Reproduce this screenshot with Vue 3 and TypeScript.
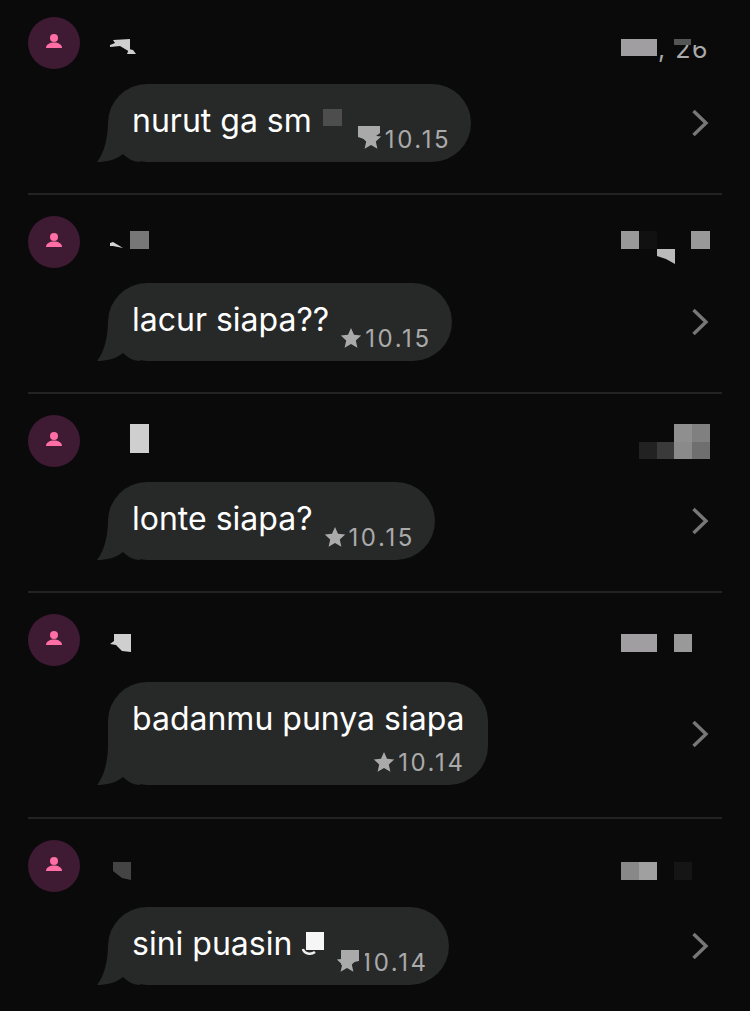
<script setup lang="ts">
interface Message {
  text: string;
  time: string;
  // px kept after the text for the emoji that the censor block sits on
  emojiGap?: number;
  // text fills the bubble, so the time drops to its own line
  stacked?: boolean;
  date?: string;
}

const messages: Message[] = [
  { text: "nurut ga sm", time: "10.15", emojiGap: 37, date: ", 26" },
  { text: "lacur siapa??", time: "10.15" },
  { text: "lonte siapa?", time: "10.15" },
  { text: "badanmu punya siapa", time: "10.14", stacked: true },
  { text: "sini puasin", time: "10.14", emojiGap: 33 },
];

// Censor blocks pasted over the screenshot: [points, fill]
const BUBBLE = "#272828";
const censors: [string, string][] = [
  // row 1
  ["110,45 115,43 113,40 130,39 130,52 120,46 110,47", "#cfcfcf"],
  ["129,49 133,50 136,54 127,54", "#cfcfcf"],
  ["621,39 657,39 657,56 621,56", "#a09ea0"],
  ["674,39 691,39 691,45 674,45", "#555555"],
  ["691,39 710,39 710,45 691,45", "#0a0a0b"],
  ["323,109 342,109 342,126 323,126", "#4d4d4d"],
  ["358,126 380,126 380,133 372,139 364,139 358,137", "#a9a9a9"],
  // row 2
  ["110,243 113,242 123,248 113,246 110,246", "#d5d5d5"],
  ["130,231 149,231 149,249 130,249", "#777777"],
  ["621,231 639,231 639,249 621,249", "#999999"],
  ["639,231 657,231 657,249 639,249", "#111111"],
  ["657,249 675,249 675,264 666,259 657,256", "#bbbbbb"],
  ["691,231 710,231 710,249 691,249", "#999999"],
  // row 3
  ["130,424 149,424 149,453 130,453", "#cfcfcf"],
  ["639,442 657,442 657,459 639,459", "#222222"],
  ["657,442 674,442 674,459 657,459", "#3a3a3a"],
  ["674,424 692,424 692,442 674,442", "#8f8f8f"],
  ["692,424 710,424 710,442 692,442", "#808080"],
  ["674,442 692,442 692,459 674,459", "#8a8a8a"],
  ["692,442 710,442 710,459 692,459", "#6f6f6f"],
  // row 4
  ["114,634 131,634 131,652 122,651 116,645 110,644 114,641", "#cfcfcf"],
  ["621,634 657,634 657,652 621,652", "#a09ea0"],
  ["674,634 692,634 692,652 674,652", "#999999"],
  // row 5
  ["113,862 131,862 131,880 122,878 113,871", "#444444"],
  ["621,862 639,862 639,880 621,880", "#888888"],
  ["639,862 657,862 657,880 639,880", "#a0a0a0"],
  ["674,862 692,862 692,880 674,880", "#151515"],
  ["306,932 324,932 324,950 306,950", "#f6f6f6"],
  ["341,950 359,950 359,961 350,963 341,965", "#aaaaaa"],
  ["359,950 365,950 365,958 359,958", BUBBLE],
];
</script>

<template>
  <div class="page">
    <div v-for="(m, i) in messages" :key="i" class="row" :class="{ tall: m.stacked }">
      <div class="head">
        <div class="avatar">
          <svg width="20" height="20" viewBox="0 0 20 20">
            <circle cx="10" cy="5" r="4" fill="#ff6fa6" />
            <path d="M2 15c0-3.600 3.800-5.500 8-5.500s8 1.900 8 5.500z" fill="#ff6fa6" />
          </svg>
        </div>
        <span v-if="m.date" class="date">{{ m.date }}</span>
      </div>
      <div class="body">
        <div class="bubble" :class="{ stacked: m.stacked }">
          <svg class="tail" width="44" height="40" viewBox="0 0 44 40">
            <path d="M12 0C12 14 9 30 1 40C10 40 20 38 27 32C32 37 38 40 44 40L44 0Z" fill="#272828" />
          </svg>
          <span class="text">{{ m.text }}<span v-if="m.emojiGap" class="emoji-gap" :style="{ width: m.emojiGap + 'px' }"></span></span>
          <span class="meta">
            <svg width="22" height="22" viewBox="0 0 22 22">
              <path d="M11 1l3 6.800 7.200.7-5.400 4.900 1.600 7.300L11 16.900l-6.400 3.800 1.600-7.300L.8 8.500 8 7.800z" fill="#aaaaaa" />
            </svg>
            <span>{{ m.time }}</span>
          </span>
        </div>
        <svg class="chevron" width="18" height="28" viewBox="0 0 18 28">
          <path d="M2.500 2L15 14 2.500 26" fill="none" stroke="#777777" stroke-width="3.400" />
        </svg>
      </div>
    </div>

    <!-- censor blocks lying over the conversation list -->
    <svg class="censors" width="750" height="1011" viewBox="0 0 750 1011">
      <polygon v-for="(c, i) in censors" :key="i" :points="c[0]" :fill="c[1]" />
      <path d="M303 949c1 5 8 6 12 3" fill="none" stroke="#eeeeee" stroke-width="2.500" />
    </svg>
  </div>
</template>

<style scoped>
.page {
  position: relative;
  width: 750px;
  height: 1011px;
  overflow: hidden;
  background: #0a0a0b;
  font-family: Inter, Roboto, "Liberation Sans", sans-serif;
}

.row {
  margin: 0 28px;
  padding: 21px 0 31px;
  border-bottom: 2px solid #222323;
}
.row:first-child {
  padding-top: 17px;
}
.row:last-of-type {
  border-bottom: none;
}
.row.tall {
  padding-bottom: 32px;
}

.head {
  display: flex;
  justify-content: space-between;
  height: 52px;
}
.avatar {
  display: flex;
  align-items: center;
  justify-content: center;
  width: 52px;
  height: 52px;
  border-radius: 50%;
  background: #3e1a33;
}
.date {
  margin: 17px 13px 0 0;
  font-size: 25px;
  line-height: 30px;
  letter-spacing: 1.5px;
  color: #aaaaaa;
}

.body {
  display: flex;
  align-items: center;
  justify-content: space-between;
  margin: 15px 13px 0 80px;
}
.tall .body {
  margin-top: 16px;
}

.bubble {
  position: relative;
  display: flex;
  gap: 11px;
  padding: 16px 21px 9px 24px;
  border-radius: 39px;
  background: #272828;
}
.bubble.stacked {
  flex-direction: column;
  gap: 6px;
  padding-right: 23px;
}
.tail {
  position: absolute;
  left: -12px;
  bottom: 0;
}

.text {
  position: relative;
  padding-bottom: 11px;
  font-size: 32px;
  line-height: 42px;
  color: #ffffff;
  white-space: nowrap;
}
.stacked .text {
  padding-bottom: 0;
}
.emoji-gap {
  display: inline-block;
}

.meta {
  display: flex;
  align-items: center;
  align-self: flex-end;
  gap: 3px;
  height: 30px;
  margin: 1px -1px -1px 0;
  font-size: 24px;
  letter-spacing: 2.6px;
  color: #aaaaaa;
}

.censors {
  position: absolute;
  top: 0;
  left: 0;
}
</style>
